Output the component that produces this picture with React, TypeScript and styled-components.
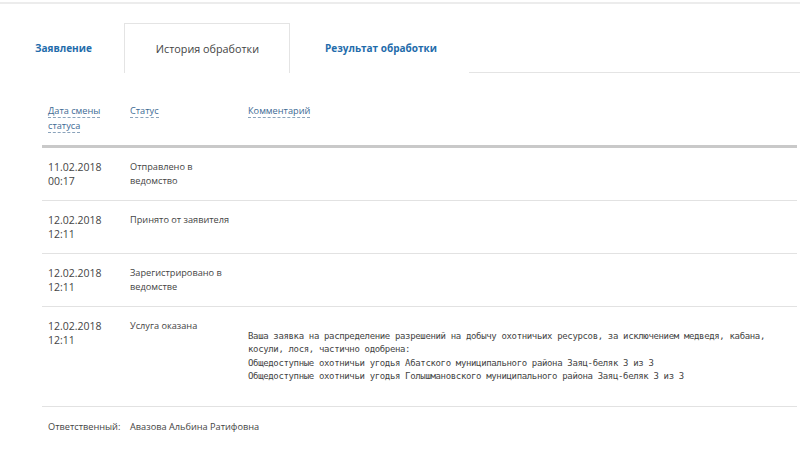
import styled, { createGlobalStyle } from 'styled-components';

const GlobalStyle = createGlobalStyle`
  html, body {
    margin: 0;
    padding: 0;
    background: #fff;
  }
  body {
    font-family: "Open Sans", "Noto Sans", sans-serif;
    color: #333;
  }
`;

type HistoryItem = {
  date: string;
  time: string;
  status: string;
  comment?: string;
};

const history: HistoryItem[] = [
  { date: '11.02.2018', time: '00:17', status: 'Отправлено в ведомство' },
  { date: '12.02.2018', time: '12:11', status: 'Принято от заявителя' },
  { date: '12.02.2018', time: '12:11', status: 'Зарегистрировано в ведомстве' },
  {
    date: '12.02.2018',
    time: '12:11',
    status: 'Услуга оказана',
    comment:
      'Ваша заявка на распределение разрешений на добычу охотничьих ресурсов, за исключением медведя, кабана,\n' +
      'косули, лося, частично одобрена:\n' +
      'Общедоступные охотничьи угодья Абатского муниципального района Заяц-беляк 3 из 3\n' +
      'Общедоступные охотничьи угодья Голышмановского муниципального района Заяц-беляк 3 из 3',
  },
];

const tabs = ['Заявление', 'История обработки', 'Результат обработки'];

const App = () => {
  return (
    <>
      <GlobalStyle />
      <Page>
        <TabBar>
          {tabs.map((t, i) => (
            <Tab key={t} $active={i === 1}>
              {t}
            </Tab>
          ))}
        </TabBar>
        <Content>
          <HistoryTable>
            <thead>
              <tr>
                <HeadCell $width={82}>
                  <SortLink>Дата смены статуса</SortLink>
                </HeadCell>
                <HeadCell $width={118}>
                  <SortLink>Статус</SortLink>
                </HeadCell>
                <HeadCell>
                  <SortLink>Комментарий</SortLink>
                </HeadCell>
              </tr>
            </thead>
            <tbody>
              {history.map((h, i) => (
                <Row key={i}>
                  <Cell>
                    <DateText>
                      {h.date}
                      <br />
                      {h.time}
                    </DateText>
                  </Cell>
                  <Cell>
                    <StatusText>{h.status}</StatusText>
                  </Cell>
                  <Cell>{h.comment && <Comment>{h.comment}</Comment>}</Cell>
                </Row>
              ))}
            </tbody>
            <tfoot>
              <tr>
                <FootCell>Ответственный:</FootCell>
                <FootCell colSpan={2}>Авазова Альбина Ратифовна</FootCell>
              </tr>
            </tfoot>
          </HistoryTable>
        </Content>
      </Page>
    </>
  );
};

const Page = styled.div`
  margin-top: 2px;
  border-top: 2px solid #ececec;
  padding-top: 19px;
`;

const TabBar = styled.div`
  display: flex;
  border-bottom: 1px solid #e4e4e4;
`;

const Tab = styled.div<{ $active?: boolean }>`
  height: 48px;
  padding: 0 ${(p) => (p.$active ? '30px 0 31px' : '31px 0 34px')};
  display: flex;
  align-items: center;
  font-size: ${(p) => (p.$active ? '10.8px' : '10px')};
  font-weight: ${(p) => (p.$active ? 500 : 700)};
  color: ${(p) => (p.$active ? '#444' : '#1f6cab')};
  border: 1px solid ${(p) => (p.$active ? '#e4e4e4' : 'transparent')};
  border-bottom: none;
  background: #fff;
  margin-bottom: -1px;
  padding-bottom: 1px;
  cursor: pointer;
`;

const Content = styled.div`
  padding: 0 3px 0 42px;
`;

const HistoryTable = styled.table`
  width: 100%;
  table-layout: fixed;
  border-collapse: collapse;
  margin-top: 30px;
  font-size: 9.2px;
  thead tr {
    border-bottom: 3px solid #c9c9c9;
  }
`;

const HeadCell = styled.th<{ $width?: number }>`
  box-sizing: border-box;
  width: ${(p) => (p.$width ? `${p.$width}px` : 'auto')};
  text-align: left;
  vertical-align: top;
  font-weight: 400;
  font-size: 9.2px;
  padding: 0 14px 12px 6px;
  line-height: 15px;
`;

const SortLink = styled.span`
  color: #3d6a94;
  border-bottom: 1px dashed #8aa3bb;
  cursor: pointer;
`;

const Row = styled.tr`
  border-bottom: 1px solid #e2e2e2;
`;

const Cell = styled.td`
  box-sizing: border-box;
  vertical-align: top;
  padding: 12px 6px 12px;
  line-height: 14px;
`;

const DateText = styled.div`
  color: #444;
  font-size: 10.5px;
`;

const StatusText = styled.div`
  color: #444;
  max-width: 102px;
`;

const Comment = styled.pre`
  margin: 11px 0 11px;
  font-family: "DejaVu Sans Mono", "Liberation Mono", monospace;
  font-size: 9px;
  letter-spacing: -0.35px;
  line-height: 13.3px;
  color: #444;
  white-space: pre-wrap;
`;

const FootCell = styled.td`
  padding: 13px 6px;
  color: #444;
  line-height: 14px;
  white-space: nowrap;
`;

export default App;
